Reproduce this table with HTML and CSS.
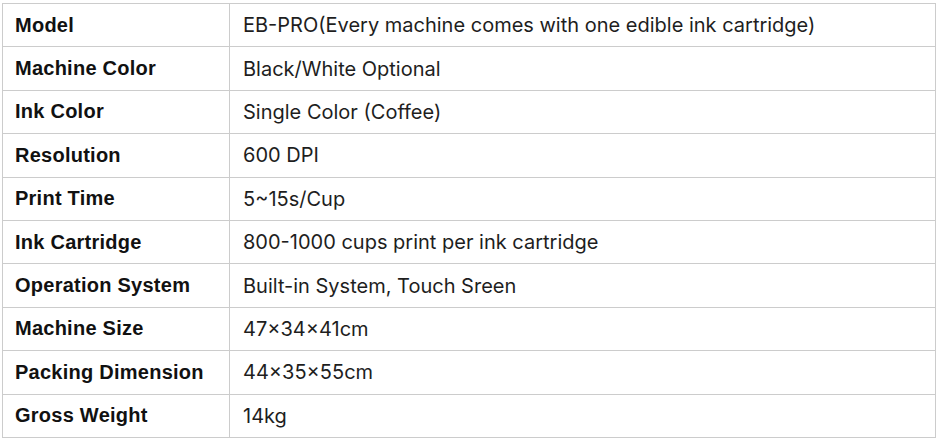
FILE: index.html
```html
<!DOCTYPE html>
<html lang="en">
<head>
<meta charset="utf-8">
<title>Specifications</title>
<link rel="stylesheet" href="styles.css">
</head>
<body>
<table class="spec">
  <tbody>
    <tr><th>Model</th><td>EB-PRO(Every machine comes with one edible ink cartridge)</td></tr>
    <tr><th>Machine Color</th><td>Black/White Optional</td></tr>
    <tr><th>Ink Color</th><td>Single Color (Coffee)</td></tr>
    <tr><th>Resolution</th><td>600 DPI</td></tr>
    <tr><th>Print Time</th><td>5~15s/Cup</td></tr>
    <tr><th>Ink Cartridge</th><td>800-1000 cups print per ink cartridge</td></tr>
    <tr><th>Operation System</th><td>Built-in System, Touch Sreen</td></tr>
    <tr><th>Machine Size</th><td>47×34×41cm</td></tr>
    <tr><th>Packing Dimension</th><td>44×35×55cm</td></tr>
    <tr><th>Gross Weight</th><td>14kg</td></tr>
  </tbody>
</table>
</body>
</html>
```
FILE: styles.css
```css
html, body {
  margin: 0;
  padding: 0;
  background: #ffffff;
}

.spec {
  border-collapse: collapse;
  width: 934px;
  margin: 3px 0 0 2px;
  table-layout: fixed;
}

.spec th,
.spec td {
  border: 1px solid #cccccc;
  height: 43.4px;
  padding: 0 13px;
  vertical-align: middle;
  text-align: left;
  box-sizing: border-box;
}

.spec th {
  width: 227px;
  font-family: "Liberation Sans", Arial, sans-serif;
  font-weight: 700;
  font-size: 20px;
  letter-spacing: 0.25px;
  color: #111111;
  padding-left: 12px;
}

.spec td {
  font-family: Inter, "Noto Sans", sans-serif;
  font-weight: 400;
  font-size: 20px;
  color: #1e1e1e;
  padding-left: 13px;
}
```
